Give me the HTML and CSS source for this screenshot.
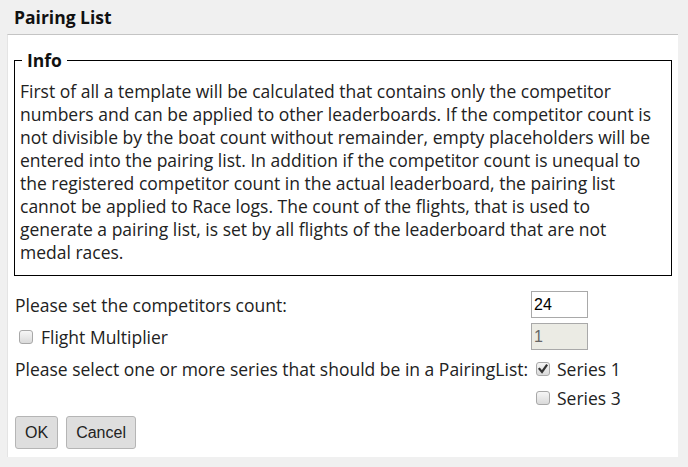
FILE: index.html
```html
<!DOCTYPE html>
<html>
<head>
<meta charset="utf-8">
<link rel="stylesheet" href="styles.css">
</head>
<body>
<div class="dialog">
  <div class="title">Pairing List</div>
  <div class="panel">
    <fieldset class="info">
      <legend>Info</legend>
      <p>First of all a template will be calculated that contains only the competitor<br>numbers and can be applied to other leaderboards. If the competitor count is<br>not divisible by the boat count without remainder, empty placeholders will be<br>entered into the pairing list. In addition if the competitor count is unequal to<br>the registered competitor count in the actual leaderboard, the pairing list<br>cannot be applied to Race logs. The count of the flights, that is used to<br>generate a pairing list, is set by all flights of the leaderboard that are not<br>medal races.</p>
    </fieldset>
    <div class="form">
      <div class="label">Please set the competitors count:</div>
      <div class="field"><input class="num" type="text" value="24"></div>
      <div class="label"><span class="cb"></span>Flight Multiplier</div>
      <div class="field"><input class="num" type="text" value="1" disabled></div>
      <div class="label">Please select one or more series that should be in a PairingList:</div>
      <div class="field series">
        <div class="opt"><span class="cb checked"><svg viewBox="0 0 14 14" width="14" height="14"><path d="M3.5 7 L6 10 L10.5 3.5" fill="none" stroke="#333" stroke-width="2.2" stroke-linecap="square"/></svg></span>Series 1</div>
        <div class="opt"><span class="cb"></span>Series 3</div>
      </div>
    </div>
    <div class="buttons">
      <button class="btn">OK</button>
      <button class="btn">Cancel</button>
    </div>
  </div>
</div>
</body>
</html>
```
FILE: styles.css
```css
html, body {
  margin: 0;
  padding: 0;
  background: #f0f0f0;
}
body {
  font-family: "Open Sans", sans-serif;
  color: #222;
}
.dialog {
  width: 688px;
  height: 467px;
}
.title {
  font-weight: bold;
  font-size: 17.5px;
  height: 34px;
  line-height: 35px;
  padding-left: 14px;
  color: #111;
}
.panel {
  margin-left: 7px;
  width: 671px;
  height: 423px;
  background: #fff;
  border-top: 1px solid #c4c4c4;
  border-left: 1px solid #e4e4e4;
  box-sizing: border-box;
  padding: 13px 6px 0 6px;
}
.info {
  margin: 0;
  border: 1px solid #000;
  padding: 8px 0 11px 5px;
  width: 658px;
  box-sizing: border-box;
}
.info legend {
  font-weight: bold;
  font-size: 17.5px;
  padding: 0 5px;
  margin-left: 2px;
  line-height: 24px;
  color: #111;
}
.info p {
  margin: 0;
  font-size: 17.5px;
  line-height: 23px;
  white-space: nowrap;
  color: #222;
}
.form {
  display: grid;
  grid-template-columns: 516px auto;
  margin-top: 15px;
  font-size: 17.5px;
  row-gap: 5px;
}
.label {
  display: flex;
  align-items: center;
  padding-left: 1px;
  height: 27px;
  white-space: nowrap;
}
.field {
  padding-left: 1px;
}
.num {
  display: block;
  width: 57px;
  height: 27px;
  box-sizing: border-box;
  border: 1px solid #a9a9a9;
  font-family: "Liberation Sans", Arial, sans-serif;
  font-size: 16px;
  padding: 1px 2px;
  color: #000;
  background: #fff;
  margin: 0;
}
.num:disabled {
  background: #ebebe4;
  color: #666;
}
.series {
  display: flex;
  flex-direction: column;
  gap: 2px;
}
.series .opt {
  display: flex;
  align-items: center;
  height: 27px;
  padding-left: 5px;
}
.cb {
  display: inline-block;
  width: 12px;
  height: 12px;
  border: 1px solid #a8a8a8;
  border-radius: 3px;
  background: linear-gradient(#f6f6f6, #dadada);
  margin: 0 8px 0 4px;
  position: relative;
  flex: none;
}
.series .cb {
  margin-left: 0;
  margin-right: 7px;
}
.cb svg {
  position: absolute;
  left: -1px;
  top: -1px;
}
.buttons {
  display: flex;
  gap: 8px;
  margin-top: 5px;
  padding-left: 1px;
}
.btn {
  font-family: "Liberation Sans", Arial, sans-serif;
  font-size: 16px;
  height: 33px;
  padding: 0 9px;
  background: #dedede;
  border: 1px solid #b5b5b5;
  border-radius: 3px;
  color: #222;
}
```
